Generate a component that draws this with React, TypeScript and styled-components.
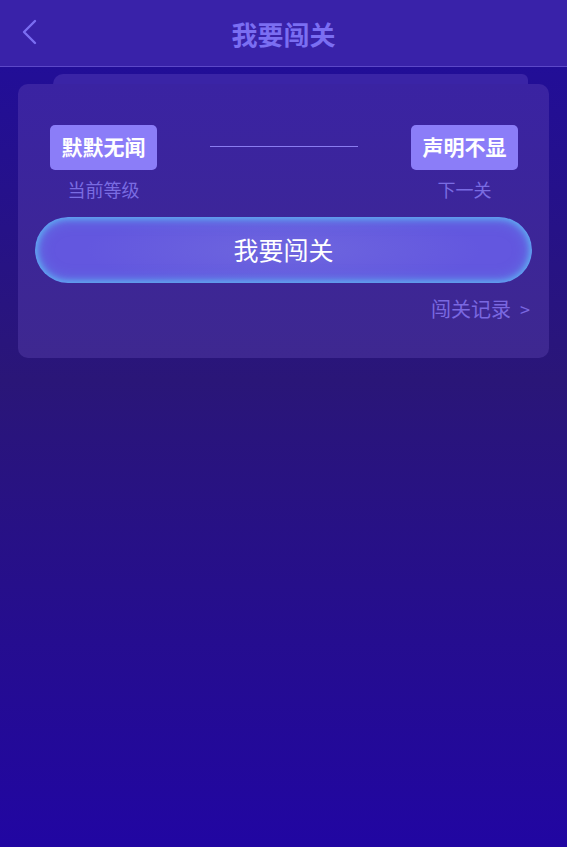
import { Component, ReactNode } from "react";
import styled, { createGlobalStyle } from "styled-components";

const GlobalStyle = createGlobalStyle`
  html, body {
    margin: 0;
    padding: 0;
    height: 100%;
  }
  body {
    font-family: "Noto Sans CJK SC", "Noto Sans", sans-serif;
    background: #22109a;
  }
  #root {
    min-height: 100%;
  }
`;

const Page = styled.div`
  width: 567px;
  min-height: 847px;
  display: flex;
  flex-direction: column;
  background: linear-gradient(180deg, #200c9e 0px, #2a1678 380px, #2106a2 847px);
`;

const Header = styled.div`
  height: 66px;
  background: #3922a9;
  border-bottom: 1px solid #5c48c8;
  display: flex;
  align-items: center;
  justify-content: center;
  position: relative;
`;

const BackBtn = styled.div`
  position: absolute;
  left: 20px;
  top: 19px;
  width: 20px;
  height: 26px;
`;

const Title = styled.h1`
  margin: 0;
  font-size: 26px;
  font-weight: 700;
  color: #7b6ef2;
`;

const Content = styled.div`
  padding: 7px 18px 0 18px;
  display: flex;
  flex-direction: column;
`;

const BackLayer = styled.div`
  height: 10px;
  margin: 0 21px 0 35px;
  background: #3a24a6;
  border-radius: 10px 6px 0 0;
`;

const Card = styled.div`
  background: linear-gradient(180deg, #3a23a2 0%, #3e2890 100%);
  border-radius: 10px;
  padding: 41px 17px 35px 17px;
  display: flex;
  flex-direction: column;
`;

const LevelRow = styled.div`
  display: flex;
  align-items: flex-start;
  justify-content: space-between;
  padding: 0 14px 0 15px;
`;

const LevelCol = styled.div`
  display: flex;
  flex-direction: column;
  align-items: center;
  gap: 7px;
`;

const Badge = styled.div`
  width: 107px;
  height: 45px;
  box-sizing: border-box;
  padding-bottom: 4px;
  border-radius: 5px;
  background: #8b7df8;
  color: #ffffff;
  font-size: 21px;
  font-weight: 700;
  display: flex;
  align-items: center;
  justify-content: center;
`;

const LevelLabel = styled.div`
  font-size: 18px;
  color: #7a6ce2;
  line-height: 24px;
`;

const Connector = styled.div`
  width: 148px;
  height: 1px;
  margin-top: 21px;
  background: #8a7cf0;
`;

const ChallengeButton = styled.button`
  margin-top: 16px;
  height: 66px;
  padding: 0 0 3px 0;
  border-radius: 33px;
  border: none;
  background:
    radial-gradient(ellipse 40% 60% at 50% 50%, rgba(130, 130, 220, 0.35), rgba(0,0,0,0) 100%),
    #6357df;
  box-shadow: inset 0 0 6px 2px #5fb2f2, inset 0 0 14px 4px rgba(95, 170, 240, 0.35);
  color: #ffffff;
  font-family: "Noto Sans CJK SC", sans-serif;
  font-size: 25px;
  font-weight: 400;
  cursor: pointer;
`;

const RecordLink = styled.div`
  margin-top: 12px;
  align-self: flex-end;
  margin-right: 2px;
  font-size: 20px;
  color: #7a68e0;
  display: flex;
  align-items: center;
  gap: 9px;
  line-height: 28px;
`;

const Arrow = styled.span`
  font-size: 18px;
`;

interface LevelProps {
  name: string;
  label: string;
}

class Level extends Component<LevelProps> {
  render(): ReactNode {
    return (
      <LevelCol>
        <Badge>{this.props.name}</Badge>
        <LevelLabel>{this.props.label}</LevelLabel>
      </LevelCol>
    );
  }
}

export default class App extends Component {
  render(): ReactNode {
    return (
      <>
        <GlobalStyle />
        <Page>
          <Header>
            <BackBtn>
              <svg width="20" height="26" viewBox="0 0 20 26" fill="none">
                <path d="M15 2 L4 13 L15 24" stroke="#7b6ef2" strokeWidth="2.4" strokeLinecap="round" strokeLinejoin="round" />
              </svg>
            </BackBtn>
            <Title>我要闯关</Title>
          </Header>
          <Content>
            <BackLayer />
            <Card>
              <LevelRow>
                <Level name="默默无闻" label="当前等级" />
                <Connector />
                <Level name="声明不显" label="下一关" />
              </LevelRow>
              <ChallengeButton>我要闯关</ChallengeButton>
              <RecordLink>
                <span>闯关记录</span>
                <Arrow>&gt;</Arrow>
              </RecordLink>
            </Card>
          </Content>
        </Page>
      </>
    );
  }
}
